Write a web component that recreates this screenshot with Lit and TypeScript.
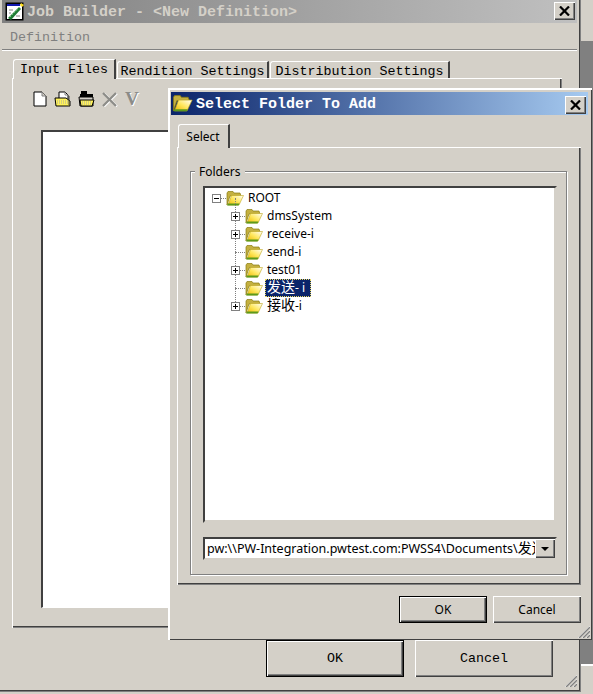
import { LitElement, html, css, svg } from "lit";
import { customElement } from "lit/decorators.js";

const folder = (w = 18, h = 15) => html`<svg class="folder" width=${w} height=${h} viewBox="0 0 18 15">
  <defs><linearGradient id="fg" x1="0" y1="1" x2="1" y2="0"><stop offset="0" stop-color="#eeb800"/><stop offset=".5" stop-color="#ffe860"/><stop offset="1" stop-color="#ffffff"/></linearGradient></defs>
  <path d="M1 2 L2 0.5 H7 L8 2 H14 L15 5 H4 L1 14 Z" fill="#c4b040" stroke="#8a7c10" stroke-width=".7"/>
  <path d="M2 14 L5.5 4.5 H17.5 L13 14 Z" fill="url(#fg)" stroke="#c0a820" stroke-width=".6"/>
  <path d="M1 14.4 H12.5 L13.5 12.6 H2 Z" fill="#5c9a1c"/>
</svg>`;

const grip = () => html`<svg class="grip" width="15" height="15" viewBox="0 0 15 15">
  ${[3, 7, 11].map((o) => svg`
    <line x1=${o} y1="15" x2="15" y2=${o} stroke="#fff" stroke-width="1"/>
    <line x1=${o + 1} y1="15" x2="15" y2=${o + 1} stroke="#808080" stroke-width="1.4"/>`)}
</svg>`;

const closeX = () => html`<svg width="11" height="10" viewBox="0 0 11 10"><path d="M1 0.5 L10 9.5 M10 0.5 L1 9.5" stroke="#000" stroke-width="2.2" fill="none"/></svg>`;

const appIcon = () => html`<svg width="20" height="20" viewBox="0 0 20 20">
  <rect x="0.5" y="0.5" width="18" height="18" fill="#000"/>
  <rect x="2" y="2" width="15" height="15" fill="#fff"/>
  <rect x="2" y="2" width="13" height="2" fill="#1018b0"/>
  <path d="M16 1 L19 3 L17 5 L15 3 Z" fill="#ffe020"/>
  <path d="M4 8 H8 M4 11 H6 M11 14 H15" stroke="#808080"/>
  <path d="M3 16 L14 5 L16 7 L6 18 Z" fill="#1f7a34"/>
  <path d="M5 15 L13 7" stroke="#6fd07c" stroke-dasharray="1.5 1.5"/>
</svg>`;

const docIcon = () => html`<svg width="14" height="16" viewBox="0 0 14 16"><path d="M1 1 H9 L13 5 V15 H1 Z" fill="#fff" stroke="#000"/><path d="M9 1 V5 H13" fill="#d4d0c8" stroke="#808080"/></svg>`;

const previewIcon = () => html`<svg width="17" height="16" viewBox="0 0 17 16">
  <path d="M5 1 H11 L14 4 V10 H5 Z" fill="#fff" stroke="#000"/><path d="M11 1 V4 H14" fill="none" stroke="#808080"/>
  <path d="M1 7 H12 L16 10 V15 H2 Z" fill="#fff35a" stroke="#000"/><path d="M3 10 H14 M3 12 H14" stroke="#a8a8a0" stroke-dasharray="1 1"/>
  <path d="M15 5 V14" stroke="#404040"/></svg>`;

const openIcon = () => html`<svg width="17" height="16" viewBox="0 0 17 16">
  <rect x="3" y="0" width="6" height="3" fill="#000"/><rect x="2" y="3" width="13" height="3" fill="#000"/>
  <path d="M1 6 H15 V15 H2 Z" fill="#d4d0c8" stroke="#000"/>
  <path d="M2 9 H16 L14 15 H3 Z" fill="#fff35a" stroke="#000"/><path d="M4 11 H14 M4 13 H13" stroke="#a8a8a0" stroke-dasharray="1 1"/></svg>`;

const xIcon = () => html`<svg width="16" height="15" viewBox="0 0 16 15">
  <path d="M2 1.5 L15 14.5 M15 1.5 L2 14.5" stroke="#fff" stroke-width="2.2"/>
  <path d="M1 1 L14 14 M14 1 L1 14" stroke="#8c8c88" stroke-width="2.2"/></svg>`;

/* CJK runs render at the larger bitmap size of the reference. */
const mixed = (text: string) =>
  text.split(/([\u4e00-\u9fff]+)/).map((part, i) => (i % 2 ? html`<span class="cjk">${part}</span>` : part));

const treeRows = [
  { label: "dmsSystem", exp: true },
  { label: "receive-i", exp: true },
  { label: "send-i", exp: false },
  { label: "test01", exp: true },
  { label: "发送- i", exp: false, selected: true },
  { label: "接收-i", exp: true },
];

@customElement("app-root")
export class AppRoot extends LitElement {
  static styles = css`
    :host { display: block; width: 593px; height: 694px; }
    * { box-sizing: border-box; }
    .desk { position: relative; width: 593px; height: 694px; background: #d4d0c8; overflow: hidden;
      font-family: "Liberation Mono", monospace; font-size: 13.33px; color: #000; display: flex; flex-direction: column; }
    .backdrop { position: absolute; left: 581px; top: 41px; width: 12px; height: 623px; background: #808080; }
    .backedge { position: absolute; left: 581px; top: 664px; width: 12px; height: 2px; background: #fff; }
    .main { position: absolute; left: 0; top: 0; width: 581px; height: 692px; background: #d4d0c8;
      border-right: 1px solid #808080; border-bottom: 1px solid #808080; box-shadow: inset -1px -1px 0 #404040;
      padding: 0 3px 0 2px; display: flex; flex-direction: column; }
    .titlebar { height: 23px; display: flex; align-items: center; flex: none; }
    .main .titlebar { background: linear-gradient(90deg, #808080, #c0c0c0); padding: 1px 2px 0 3px; }
    .main .title { margin-left: 2px; font-size: 15px; color: #d4d0c8; font-weight: bold; flex: 1; padding-top: 1px; }
    .close { width: 21px; height: 18px; background: #d4d0c8; display: flex; align-items: center; justify-content: center;
      box-shadow: inset 1px 1px 0 #fff, inset -1px -1px 0 #404040, inset -2px -2px 0 #808080; flex: none; }
    .main .close { margin-bottom: 2px; }
    .menu { padding: 2px 0 0 8px; display: flex; align-items: center; color: #808080; border-bottom: 1px solid #808080; flex: none; height: 27px; box-shadow: 0 1px 0 #fff; }
    .tabs { display: flex; align-items: flex-end; flex: none; position: relative; z-index: 1; }
    .main .tabs { margin: 8px 0 0 11px; height: 20px; gap: 1px; }
    .tab { background: #d4d0c8; border-top: 1px solid #fff; border-left: 1px solid #fff; border-right: 2px solid #404040;
      border-top-left-radius: 3px; display: flex; align-items: center; justify-content: center; white-space: nowrap; }
    .main .tab { height: 17px; padding: 2px 2px 0 2px; font-size: 13.33px; }
    .main .tab.active { height: 20px; margin-bottom: -1px; width: 103px; padding-top: 0; }
    .main .tab.r { width: 152px; }
    .main .tab.d { width: 180px; }
    .panel { background: #d4d0c8; box-shadow: inset 1px 1px 0 #fff, inset -1px -1px 0 #808080, inset -2px -2px 0 #404040; flex: none; }
    .main .panel { margin-left: 10px; width: 550px; height: 550px; padding: 13px 0 0 21px; }
    .toolbar { display: flex; align-items: center; gap: 7px; height: 16px; }
    .v { font-family: "Liberation Serif", serif; font-weight: bold; font-size: 19px; line-height: 16px; color: #8c8c88; text-shadow: 1px 1px 0 #fff; }
    .list { margin: 23px 0 0 8px; width: 500px; height: 478px; background: #fff;
      border-top: 2px solid #404040; border-left: 2px solid #404040; border-bottom: 1px solid #fff; }
    .actions { display: flex; flex: none; }
    .main .actions { margin: 12px 0 0 264px; gap: 11px; }
    .btn { background: #d4d0c8; display: flex; align-items: center; justify-content: center;
      box-shadow: inset 1px 1px 0 #fff, inset -1px -1px 0 #404040, inset -2px -2px 0 #808080; }
    .btn.def { box-shadow: inset 0 0 0 1px #000, inset 2px 2px 0 #fff, inset -2px -2px 0 #404040, inset -3px -3px 0 #808080; }
    .main .btn { width: 138px; height: 37px; font-size: 13.33px; }
    .grip { position: absolute; right: 3px; bottom: 4px; }
    .dialog { position: absolute; left: 168px; top: 88px; width: 424px; height: 552px; background: #d4d0c8;
      padding: 4px 4px 0 3px; display: flex; flex-direction: column;
      box-shadow: inset 2px 2px 0 #fff, inset -1px -1px 0 #404040;
      font-family: "Noto Sans", "Noto Sans CJK SC", sans-serif; font-size: 12px; }
    .dialog .titlebar { background: linear-gradient(90deg, #0a246a, #a6caf0); padding: 0 2px 0 1px; gap: 3px; }
    .dialog .title { font-family: "Liberation Mono", monospace; font-weight: bold; font-size: 15px; color: #fff; flex: 1; padding-top: 2px; }
    .dialog .close { margin-top: 2px; }
    .dialog .tabs { margin: 9px 0 0 7px; }
    .dialog .tab { width: 52px; height: 24px; margin-bottom: -1px; padding-right: 1px; }
    .dialog .panel { margin-left: 6px; width: 404px; height: 438px; padding: 24px 0 0 13px; }
    .group { width: 377px; height: 404px; padding: 0 0 0 12px;
      border: 1px solid #808080; box-shadow: inset 1px 1px 0 #fff, 1px 1px 0 #fff; }
    .legend { width: fit-content; height: 15px; margin: -8px 0 7px -8px; padding: 0 5px 0 4px; background: #d4d0c8; line-height: 15px; }
    .tree { width: 354px; height: 337px; padding-top: 1px; background: #fff; border: 2px solid #404040; border-right-color: #d4d0c8; border-bottom-color: #d4d0c8; box-shadow: inset -1px -1px 0 #d4d0c8; }
    .row { position: relative; height: 18px; display: flex; align-items: center; white-space: nowrap; line-height: 18px; }
    .row.root { padding-left: 21px; gap: 4px; }
    .row.child { padding-left: 40px; gap: 2px; }
    .row.child::before { content: ""; position: absolute; left: 30px; top: -9px; height: 18px; border-left: 1px dotted #808080; }
    .row.child::after { content: ""; position: absolute; left: 30px; top: 9px; width: 10px; border-top: 1px dotted #808080; }
    .row.root::after { content: ""; position: absolute; left: 16px; top: 9px; width: 5px; border-top: 1px dotted #808080; }
    .expander { position: absolute; top: 5px; width: 9px; height: 9px; border: 1px solid #808080; background: #fff; z-index: 1; }
    .root .expander { left: 7px; }
    .child .expander { left: 26px; }
    .expander::before { content: ""; position: absolute; left: 1px; top: 3px; width: 5px; height: 1px; background: #000; }
    .expander.plus::after { content: ""; position: absolute; left: 3px; top: 1px; width: 1px; height: 5px; background: #000; }
    .label { padding: 0 2px; height: 18px; }
    .label.sel { background: #0a246a; color: #fff; outline: 1px dotted #e8d860; outline-offset: -1px; width: 46px; }
    .cjk { font-family: "Noto Sans CJK SC", sans-serif; font-size: 14px; line-height: 14px; }
    .combo { margin-top: 14px; width: 354px; height: 23px; background: #fff; border: 2px solid #404040; border-right-color: #d4d0c8; border-bottom-color: #d4d0c8;
      display: flex; align-items: center; overflow: hidden; }
    .combo .val { flex: 1; overflow: hidden; white-space: nowrap; padding-left: 2px; font-size: 12.5px; line-height: 17px; }
    .combo .arrow { flex: none; width: 20px; height: 19px; background: #d4d0c8; display: flex; align-items: center; justify-content: center;
      box-shadow: inset 1px 1px 0 #fff, inset -1px -1px 0 #404040, inset -2px -2px 0 #808080; }
    .tri { width: 0; height: 0; border-left: 4px solid transparent; border-right: 4px solid transparent; border-top: 4px solid #000; }
    .dialog .actions { margin: 11px 0 0 228px; gap: 6px; }
    .dialog .btn { width: 88px; height: 27px; }
    .dialog .grip { right: 2px; bottom: 2px; }
  `;

  render() {
    return html`<div class="desk">
      <div class="backdrop"></div>
      <div class="backedge"></div>
      <section class="main">
        <div class="titlebar">
          ${appIcon()}
          <span class="title">Job Builder - &lt;New Definition&gt;</span>
          <div class="close">${closeX()}</div>
        </div>
        <div class="menu">Definition</div>
        <div class="tabs">
          <div class="tab active">Input Files</div>
          <div class="tab r">Rendition Settings</div>
          <div class="tab d">Distribution Settings</div>
        </div>
        <div class="panel">
          <div class="toolbar">
            ${docIcon()}${previewIcon()}${openIcon()}${xIcon()}<span class="v">V</span>
          </div>
          <div class="list"></div>
        </div>
        <div class="actions">
          <div class="btn def">OK</div>
          <div class="btn">Cancel</div>
        </div>
        ${grip()}
      </section>
      <section class="dialog">
        <div class="titlebar">
          ${folder(21, 17)}
          <span class="title">Select Folder To Add</span>
          <div class="close">${closeX()}</div>
        </div>
        <div class="tabs"><div class="tab">Select</div></div>
        <div class="panel">
          <div class="group">
            <div class="legend">Folders</div>
            <div class="tree">
              <div class="row root"><span class="expander"></span>${folder()}<span>ROOT</span></div>
              ${treeRows.map((r) => html`<div class="row child">
                ${r.exp ? html`<span class="expander plus"></span>` : ""}
                ${folder()}
                <span class="label ${r.selected ? "sel" : ""}">${mixed(r.label)}</span>
              </div>`)}
            </div>
            <div class="combo">
              <div class="val">${mixed("pw:\\\\PW-Integration.pwtest.com:PWSS4\\Documents\\发送-i")}</div>
              <div class="arrow"><div class="tri"></div></div>
            </div>
          </div>
        </div>
        <div class="actions">
          <div class="btn def">OK</div>
          <div class="btn">Cancel</div>
        </div>
        ${grip()}
      </section>
    </div>`;
  }
}
